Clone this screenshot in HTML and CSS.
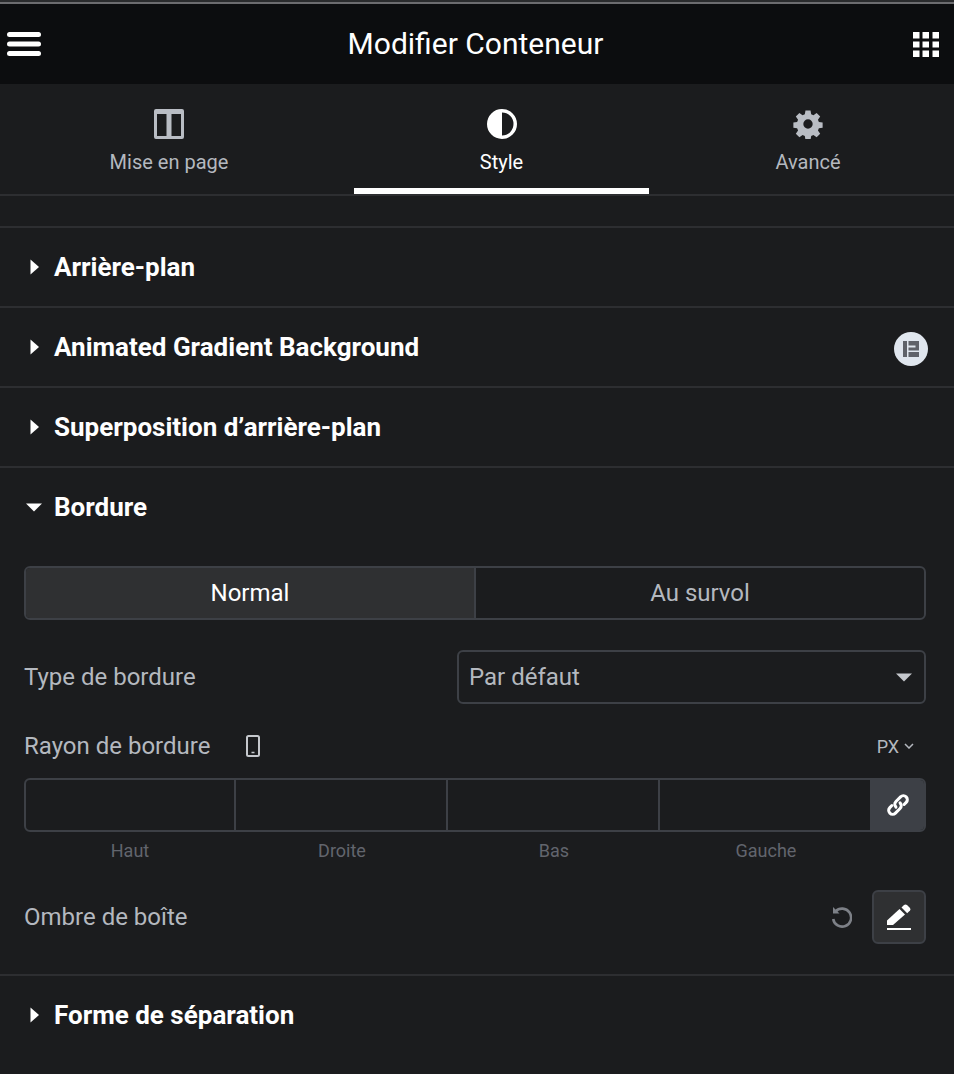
FILE: index.html
```html
<!DOCTYPE html>
<html lang="fr">
<head>
<meta charset="utf-8">
<title>Modifier Conteneur</title>
<link rel="stylesheet" href="styles.css">
</head>
<body>
<div class="panel">
  <div class="strip"></div>
  <header class="head">
    <svg class="burger" viewBox="0 0 34 24" aria-hidden="true"><rect x="0" y="0" width="34" height="5" rx="2.5"/><rect x="0" y="9.500" width="34" height="5" rx="2.5"/><rect x="0" y="19" width="34" height="5" rx="2.5"/></svg>
    <h1 class="title">Modifier Conteneur</h1>
    <svg class="grid-icon" viewBox="0 0 26 25" aria-hidden="true"><rect x="0" y="0" width="6.500" height="6.500"/><rect x="9.500" y="0" width="6.500" height="6.500"/><rect x="19.500" y="0" width="6.500" height="6.500"/><rect x="0" y="9.500" width="6.500" height="6"/><rect x="9.500" y="9.500" width="6.500" height="6"/><rect x="19.500" y="9.500" width="6.500" height="6"/><rect x="0" y="18.500" width="6.500" height="6.500"/><rect x="9.500" y="18.500" width="6.500" height="6.500"/><rect x="19.500" y="18.500" width="6.500" height="6.500"/></svg>
  </header>

  <nav class="tabs">
    <div class="tab tab-first">
      <svg class="tab-icon" viewBox="0 0 30 30" aria-hidden="true"><path fill-rule="evenodd" d="M2 0h26a2 2 0 0 1 2 2v26a2 2 0 0 1-2 2H2a2 2 0 0 1-2-2V2a2 2 0 0 1 2-2zM3 5v22h9.500V5zM17.500 5v22h9.500V5z"/></svg>
      <span class="tab-label">Mise en page</span>
    </div>
    <div class="tab tab-active">
      <svg class="tab-icon" viewBox="0 0 30 30" aria-hidden="true"><path fill-rule="evenodd" d="M15 0a15 15 0 1 1 0 30a15 15 0 0 1 0-30zM15 3.500v23a11.500 11.500 0 0 0 0-23z"/></svg>
      <span class="tab-label">Style</span>
    </div>
    <div class="tab tab-last">
      <svg class="tab-icon" viewBox="-1 -1 32 32" aria-hidden="true"><path fill-rule="evenodd" d="M12.300 0.500h5.400l.7 4.100 2.400 1 3.400-2.400 3.800 3.800-2.400 3.400 1 2.400 4 .7v5.400l-4 .7-1 2.400 2.400 3.400-3.800 3.800-3.400-2.400-2.400 1-.7 4.100h-5.400l-.7-4.100-2.400-1-3.400 2.400-3.800-3.800 2.400-3.400-1-2.400-4-.7v-5.400l4-.7 1-2.400-2.400-3.400 3.800-3.800 3.400 2.400 2.400-1zM15 10a5 5 0 1 0 0 10a5 5 0 0 0 0-10z"/></svg>
      <span class="tab-label">Avancé</span>
    </div>
  </nav>

  <div class="spacer"></div>

  <section class="section">
    <svg class="caret" viewBox="0 0 9 16" aria-hidden="true"><path d="M0.500 0.500L9 8L0.500 15.500Z"/></svg>
    <h2 class="section-title">Arrière-plan</h2>
  </section>
  <section class="section">
    <svg class="caret" viewBox="0 0 9 16" aria-hidden="true"><path d="M0.500 0.500L9 8L0.500 15.500Z"/></svg>
    <h2 class="section-title">Animated Gradient Background</h2>
    <span class="badge">
      <svg class="badge-icon" viewBox="0 0 16 16" aria-hidden="true"><path fill-rule="evenodd" d="M0 0h16v16H0zM4 0v16h1.500V0zM5.500 4.500v2h7v-2zM5.500 9.500v1.500h10.500v-1.500z"/></svg>
    </span>
  </section>
  <section class="section">
    <svg class="caret" viewBox="0 0 9 16" aria-hidden="true"><path d="M0.500 0.500L9 8L0.500 15.500Z"/></svg>
    <h2 class="section-title">Superposition d’arrière-plan</h2>
  </section>

  <section class="open">
    <div class="open-head">
      <svg class="caret-down" viewBox="0 0 16 9" aria-hidden="true"><path d="M0 0.500H16L8 8.500Z"/></svg>
      <h2 class="section-title">Bordure</h2>
    </div>

    <div class="switch">
      <div class="switch-item switch-on">Normal</div>
      <div class="switch-item">Au survol</div>
    </div>

    <div class="row-select">
      <span class="label">Type de bordure</span>
      <div class="select">
        <span>Par défaut</span>
        <svg class="select-caret" viewBox="0 0 16 9" aria-hidden="true"><path d="M0 0.500H16L8 8.500Z"/></svg>
      </div>
    </div>

    <div class="row-radius">
      <span class="label">Rayon de bordure</span>
      <svg class="phone" viewBox="0 0 14 22" aria-hidden="true"><rect x="1" y="1" width="12" height="20" rx="1.500"/><path class="phone-dot" d="M5.500 17.500h3"/></svg>
      <span class="unit">PX<svg class="unit-chev" viewBox="0 0 10 6" aria-hidden="true"><path d="M1 1l4 4 4-4"/></svg></span>
    </div>

    <div class="dims">
      <div class="dim"></div>
      <div class="dim"></div>
      <div class="dim"></div>
      <div class="dim"></div>
      <div class="dim-link">
        <svg class="link-icon" viewBox="0 0 24 24" aria-hidden="true"><g transform="rotate(-45 12 12)"><path d="M14.500 12a3.400 3.400 0 0 1-3.400 3.400H5.500a3.400 3.400 0 0 1 0-6.800H8"/><path d="M9.500 12a3.400 3.400 0 0 1 3.400-3.400H18.500a3.400 3.400 0 0 1 0 6.800H16"/></g></svg>
      </div>
    </div>
    <div class="dim-labels">
      <span>Haut</span><span>Droite</span><span>Bas</span><span>Gauche</span><span></span>
    </div>

    <div class="row-shadow">
      <span class="label">Ombre de boîte</span>
      <svg class="undo" viewBox="0 0 20 22" aria-hidden="true"><path d="M3.500 5.500A9 9 0 1 1 1.200 13"/><path class="undo-head" d="M1 1v6.500h6.500z"/></svg>
      <div class="edit">
        <svg class="pen" viewBox="0 0 24 26" aria-hidden="true"><path d="M0 21v-4.500L12.500 5l5.500 5.500L6 21z"/><path d="M14.500 3.500l2.500-2.500q1.500-1 3 0l3 3q1 1.500 0 2.500l-2.800 2.700z"/><rect x="0" y="24" width="24" height="2"/></svg>
      </div>
    </div>
  </section>

  <section class="section section-last">
    <svg class="caret" viewBox="0 0 9 16" aria-hidden="true"><path d="M0.500 0.500L9 8L0.500 15.500Z"/></svg>
    <h2 class="section-title">Forme de séparation</h2>
  </section>
</div>
</body>
</html>
```

FILE: styles.css
```css
* { box-sizing: border-box; }
html, body { margin: 0; padding: 0; }
body { background: #1b1c1e; font-family: Roboto, "Liberation Sans", sans-serif; color: #b4b8bf; }
.panel { width: 954px; height: 1074px; overflow: hidden; background: #1b1c1e; }

.strip { height: 4px; background: #0c0d0f; border-top: 2px solid #2a2b2d; border-bottom: 2px solid #6c6c6f; }

.head { height: 80px; background: #0c0d0f; display: flex; align-items: center; justify-content: space-between; padding: 0 15px 0 7px; }
.title { margin: 0 3px 0 0; font-weight: 400; font-size: 30px; color: #fff; line-height: 1; }
.burger { width: 34px; height: 24px; fill: #fff; }
.grid-icon { width: 26px; height: 25px; fill: #fff; }

.tabs { display: grid; grid-template-columns: 354px 295px 1fr; height: 112px; border-bottom: 2px solid #2d2e31; }
.tab { display: flex; flex-direction: column; align-items: center; padding-top: 25px; border-bottom: 6px solid transparent; height: 110px; }
.tab-first { padding-right: 16px; }
.tab-last { padding-left: 13px; }
.tab-active { border-bottom-color: #fff; color: #fff; }
.tab-icon { width: 30px; height: 30px; fill: #b9bdc4; display: block; }
.tab-active .tab-icon { fill: #fff; }
.tab-label { font-size: 20px; line-height: 24px; margin-top: 11px; }

.spacer { height: 32px; border-bottom: 2px solid #2d2e31; }

.section { height: 80px; border-bottom: 2px solid #2d2e31; display: flex; align-items: center; padding: 0 26px 0 30px; }
.section-last { border-bottom: 0; height: 78px; }
.section-title { margin: 0; font-size: 26px; font-weight: 700; color: #fff; line-height: 30px; }
.caret { width: 9px; height: 16px; fill: #fff; margin-right: 15px; flex: none; }
.caret-down { width: 16px; height: 9px; fill: #fff; margin-right: 12px; margin-left: 26px; flex: none; }
.badge { margin-left: auto; margin-top: 4px; width: 34px; height: 34px; border-radius: 50%; background: #e0e6ee; display: flex; align-items: center; justify-content: center; }
.badge-icon { width: 16px; height: 16px; fill: #5f6269; }

.open { height: 508px; border-bottom: 2px solid #2d2e31; }
.open-head { display: flex; align-items: center; height: 78px; }

.switch { display: flex; margin: 20px 28px 0 24px; height: 54px; border: 2px solid #3d4046; border-radius: 6px; overflow: hidden; font-size: 24px; color: #b4b8bf; }
.switch-item { display: flex; align-items: center; justify-content: center; }
.switch-item:first-child { width: 450px; border-right: 2px solid #3d4046; }
.switch-item:last-child { flex: 1; }
.switch-on { background: #2f3032; color: #fff; }

.label { font-size: 24px; color: #b4b8bf; line-height: 28px; }

.row-select { display: flex; align-items: center; justify-content: space-between; margin: 30px 28px 0 24px; }
.select { width: 469px; height: 54px; border: 2px solid #3d4046; border-radius: 6px; display: flex; align-items: center; justify-content: space-between; padding: 0 12px 0 10px; font-size: 24px; color: #b4b8bf; }
.select-caret { width: 16px; height: 9px; fill: #c5c8cd; }

.row-radius { display: flex; align-items: center; margin: 28px 40px 0 24px; height: 28px; }
.phone { width: 14px; height: 22px; margin-left: 36px; fill: none; stroke: #c5c8cd; stroke-width: 2; }
.phone-dot { stroke-width: 1.500; }
.unit { margin-left: auto; font-size: 18px; color: #b4b8bf; display: flex; align-items: center; gap: 5px; }
.unit-chev { width: 10px; height: 6px; fill: none; stroke: #b4b8bf; stroke-width: 1.500; }

.dims { display: grid; grid-template-columns: 210px 212px 212px 210px 54px; height: 54px; margin: 18px 28px 0 24px; border: 2px solid #3d4046; border-radius: 6px; overflow: hidden; }
.dim { border-right: 2px solid #3d4046; }
.dim:nth-child(4) { border-right: 0; }
.dim-link { background: #3d4046; display: flex; align-items: center; justify-content: center; margin: -2px -2px -2px 0; }
.link-icon { width: 28px; height: 28px; fill: none; stroke: #fff; stroke-width: 2.600; stroke-linecap: round; }

.dim-labels { display: grid; grid-template-columns: 212px 212px 212px 212px 54px; margin: 8px 28px 0 24px; font-size: 18px; line-height: 22px; color: #62656d; text-align: center; }

.row-shadow { display: flex; align-items: center; margin: 28px 28px 0 24px; height: 54px; }
.undo { width: 20px; height: 22px; margin-left: auto; margin-right: 20px; fill: none; stroke: #7d8087; stroke-width: 2.600; }
.undo-head { fill: #7d8087; stroke: none; }
.edit { width: 54px; height: 54px; background: #2f3032; border: 2px solid #3d4046; border-radius: 6px; display: flex; align-items: center; justify-content: center; }
.pen { width: 24px; height: 26px; fill: #fff; }
```
